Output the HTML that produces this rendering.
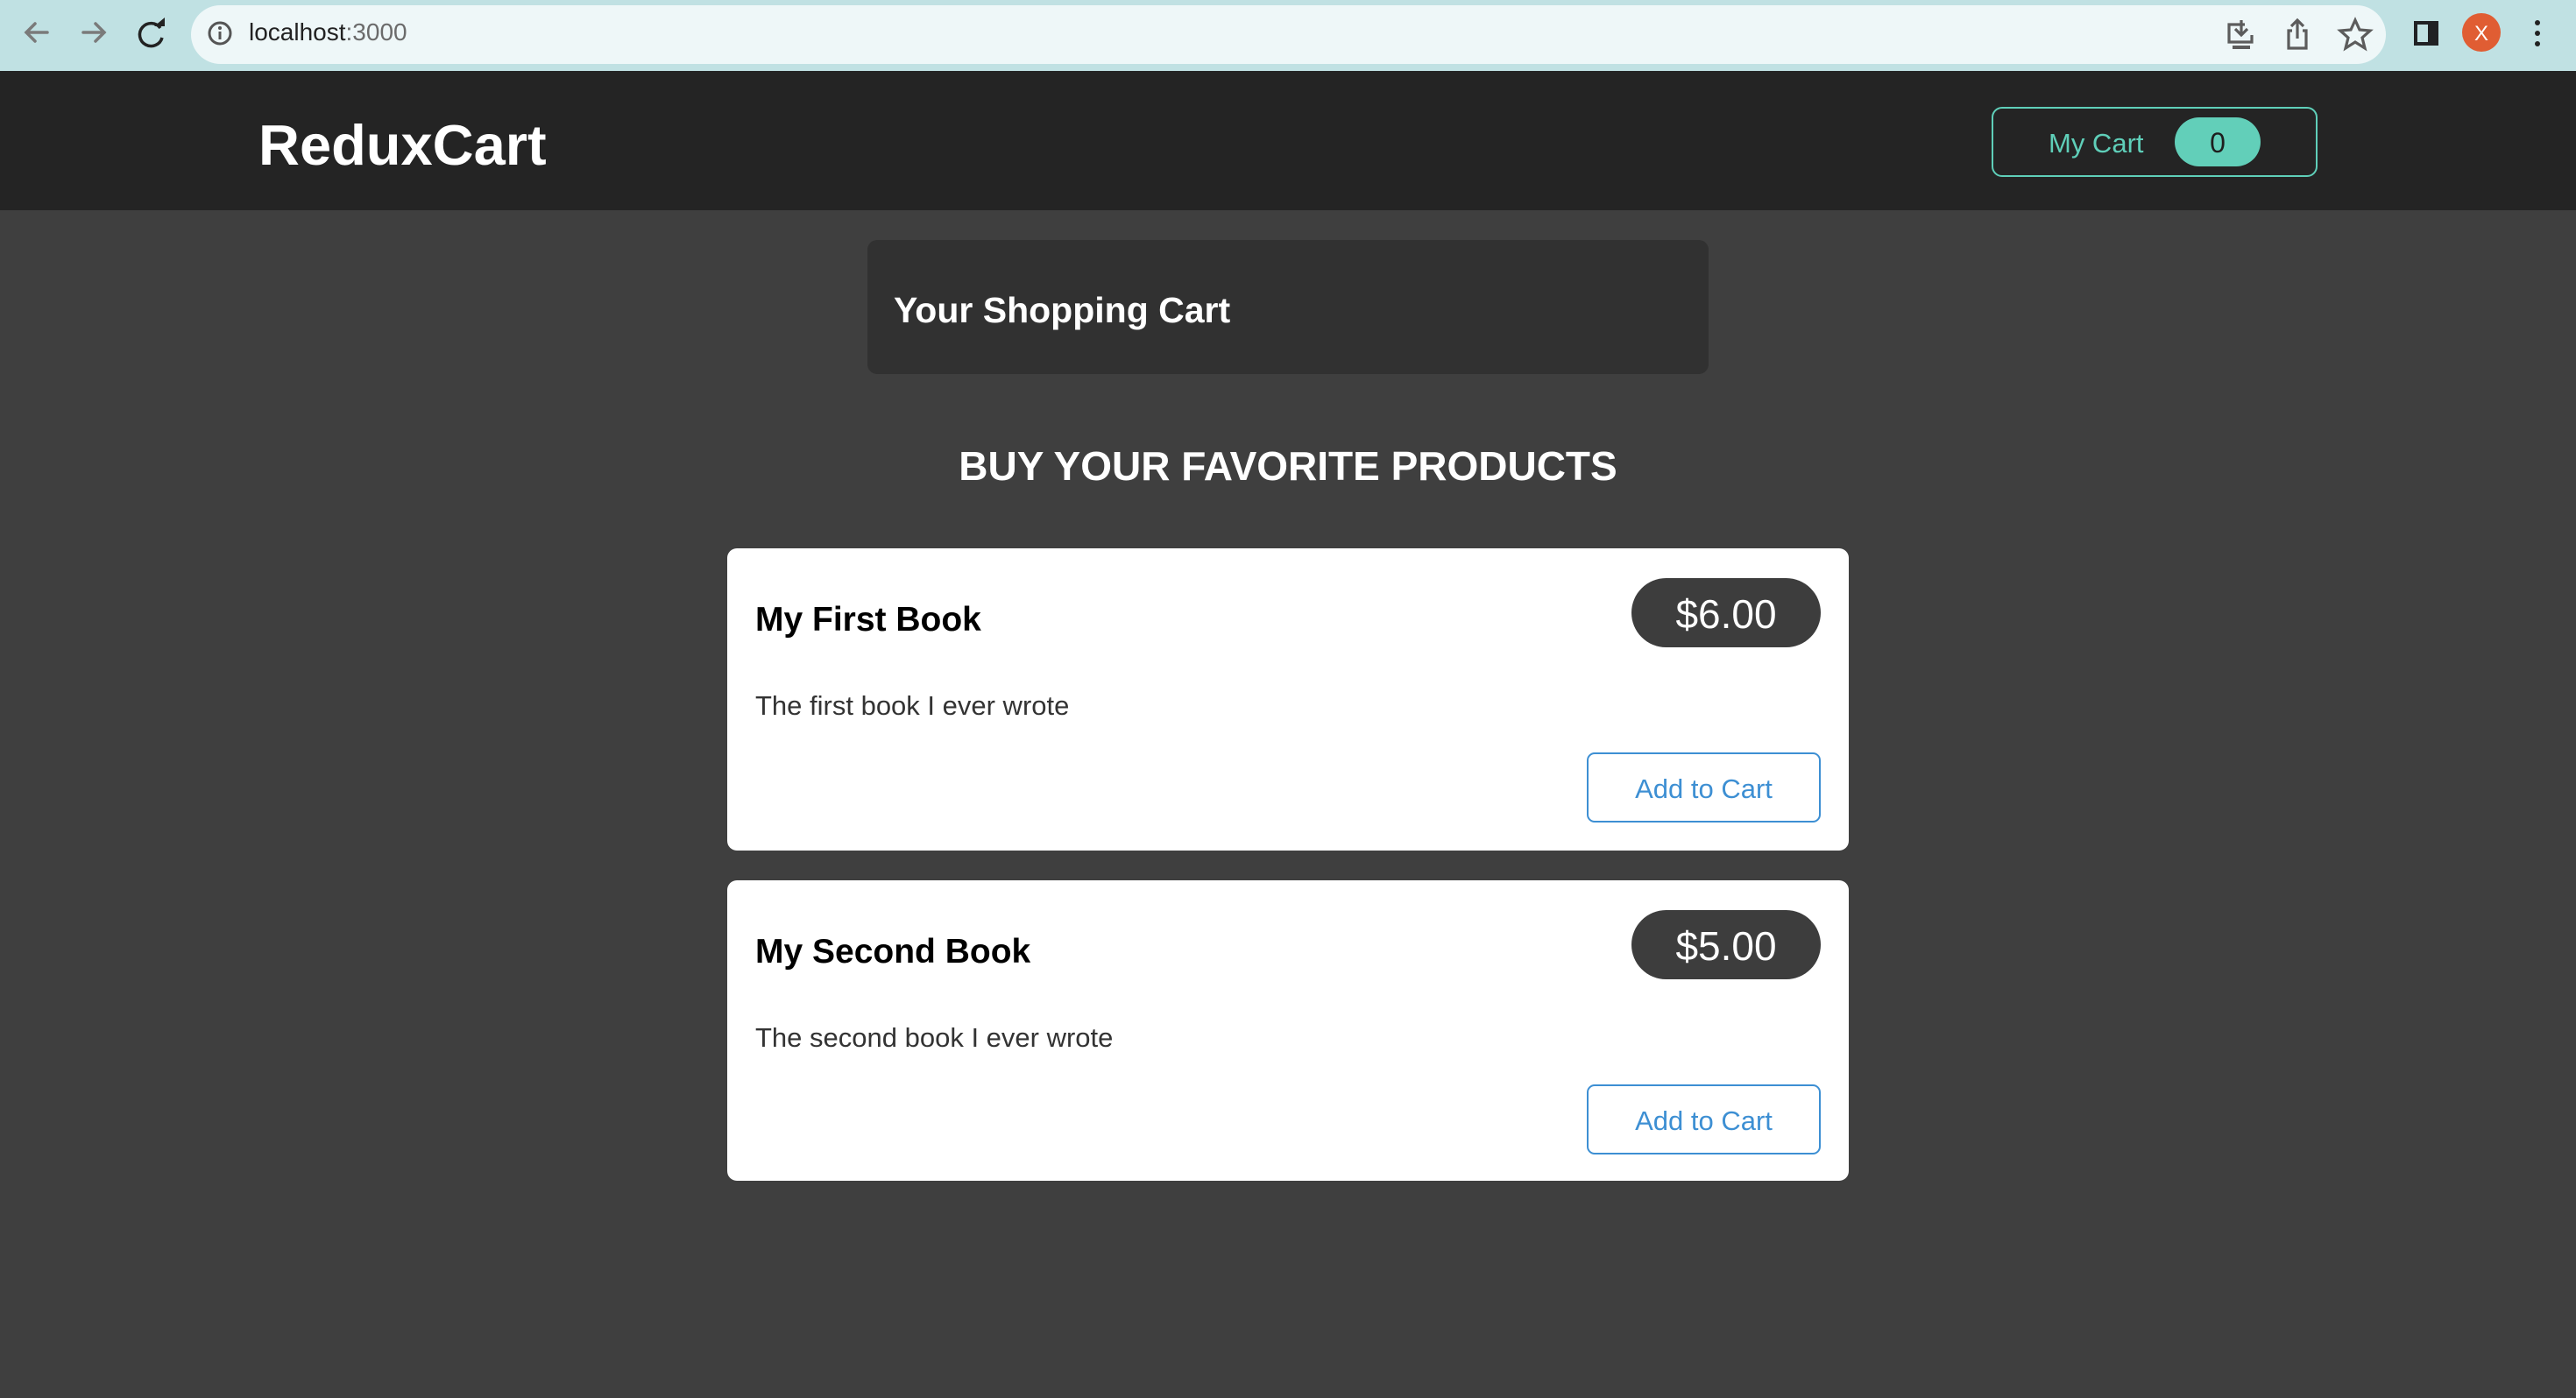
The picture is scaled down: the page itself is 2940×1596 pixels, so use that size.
<!DOCTYPE html>
<html><head><meta charset="utf-8"><style>
*{margin:0;padding:0;box-sizing:border-box}
body{width:2940px;height:1596px;background:#3f3f3f;font-family:"Liberation Sans",sans-serif;position:relative;overflow:hidden}
.abs{position:absolute}
.bar{left:0;top:0;width:2940px;height:81px;background:#c0e1e3}
.pill{left:218px;top:6px;width:2505px;height:67px;background:#eef7f8;border-radius:34px}
.hdr{left:0;top:81px;width:2940px;height:159px;background:#242424}
.t{white-space:nowrap;line-height:1}
.card{background:#fff;border-radius:11px;left:830px;width:1280px}
.price{background:#3d3d3d;border-radius:40px;color:#fff;font-size:46px;display:flex;align-items:center;justify-content:center;width:216px;height:79px;left:1862px;padding-top:3px}
.btn{border:2px solid #3d8fd3;border-radius:9px;color:#3d8fd3;font-size:31px;display:flex;align-items:center;justify-content:center;width:267px;height:80px;left:1811px;padding-top:3px}
</style></head><body>
<div class="abs bar"></div>
<div class="abs pill"></div>
<svg class="abs" style="left:0;top:0" width="220" height="81">
<g stroke="#7a7a7a" stroke-width="3.5" fill="none" stroke-linecap="round">
<path d="M30 37h24M40 27l-10 10 10 10"/>
<path d="M95 37h24M109 27l10 10-10 10"/>
</g>
<path d="M183 32a13 13 0 1 0 2 11" stroke="#222" stroke-width="3.5" fill="none"/>
<path d="M176 26l12 0 0 -10z" fill="#222" transform="translate(0,4)"/>
</svg>
<svg class="abs" style="left:235px;top:22px" width="32" height="32"><circle cx="16" cy="16" r="12" stroke="#555" stroke-width="3" fill="none"/><path d="M16 14v9" stroke="#555" stroke-width="3"/><circle cx="16" cy="10" r="2" fill="#555"/></svg>
<div class="abs t" style="left:284px;top:23px;font-size:28px;color:#222">localhost<span style="color:#6b6b6b">:3000</span></div>
<svg class="abs" style="left:2530px;top:15px" width="400" height="50">
<g stroke="#5c5c5c" stroke-width="3.2" fill="none">
<path d="M32 13h-18v20h26v-8M28 8v16M21 18l7 7 7-7"/><path d="M18 39h20" stroke-width="4"/>
<path d="M86 20h-4v20h20v-20h-4M92 29v-20M85 15l7-7 7 7"/>
<path d="M158 8l5 11 12 1-9 8 3 12-11-7-11 7 3-12-9-8 12-1z"/>
</g>
<rect x="225" y="9" width="28" height="28" fill="#202124"/><rect x="229" y="13" width="12" height="20" fill="#c0e1e3"/>
<circle cx="302" cy="22" r="22" fill="#e05d33"/>
<text x="302" y="31" font-size="24" fill="#fff" text-anchor="middle" font-family="Liberation Sans">X</text>
<circle cx="366" cy="11" r="3" fill="#222"/><circle cx="366" cy="23" r="3" fill="#222"/><circle cx="366" cy="35" r="3" fill="#222"/>
</svg>
<div class="abs hdr"></div>
<div class="abs t" style="left:295px;top:133px;font-size:65px;font-weight:bold;color:#fff;letter-spacing:0px">ReduxCart</div>
<div class="abs" style="left:2273px;top:122px;width:372px;height:80px;border:2px solid #5fcfb9;border-radius:12px"></div>
<div class="abs t" style="left:2338px;top:148px;font-size:31px;color:#5fcfb9">My Cart</div>
<div class="abs" style="left:2482px;top:134px;width:98px;height:56px;border-radius:28px;background:#62cfb9;color:#1e1e1e;font-size:32px;display:flex;align-items:center;justify-content:center;padding-top:3px">0</div>
<div class="abs" style="left:990px;top:274px;width:960px;height:153px;background:#313131;border-radius:11px"></div>
<div class="abs t" style="left:1020px;top:334px;font-size:41px;font-weight:bold;color:#fff">Your Shopping Cart</div>
<div class="abs t" style="left:0;width:2940px;text-align:center;top:509px;font-size:46px;font-weight:bold;color:#fff">BUY YOUR FAVORITE PRODUCTS</div>

<div class="abs card" style="top:626px;height:345px"></div>
<div class="abs t" style="left:862px;top:688px;font-size:39px;font-weight:bold;color:#000">My First Book</div>
<div class="abs price" style="top:660px">$6.00</div>
<div class="abs t" style="left:862px;top:790px;font-size:31px;color:#333">The first book I ever wrote</div>
<div class="abs btn" style="top:859px">Add to Cart</div>

<div class="abs card" style="top:1005px;height:343px"></div>
<div class="abs t" style="left:862px;top:1067px;font-size:39px;font-weight:bold;color:#000">My Second Book</div>
<div class="abs price" style="top:1039px">$5.00</div>
<div class="abs t" style="left:862px;top:1169px;font-size:31px;color:#333">The second book I ever wrote</div>
<div class="abs btn" style="top:1238px">Add to Cart</div>
</body></html>
